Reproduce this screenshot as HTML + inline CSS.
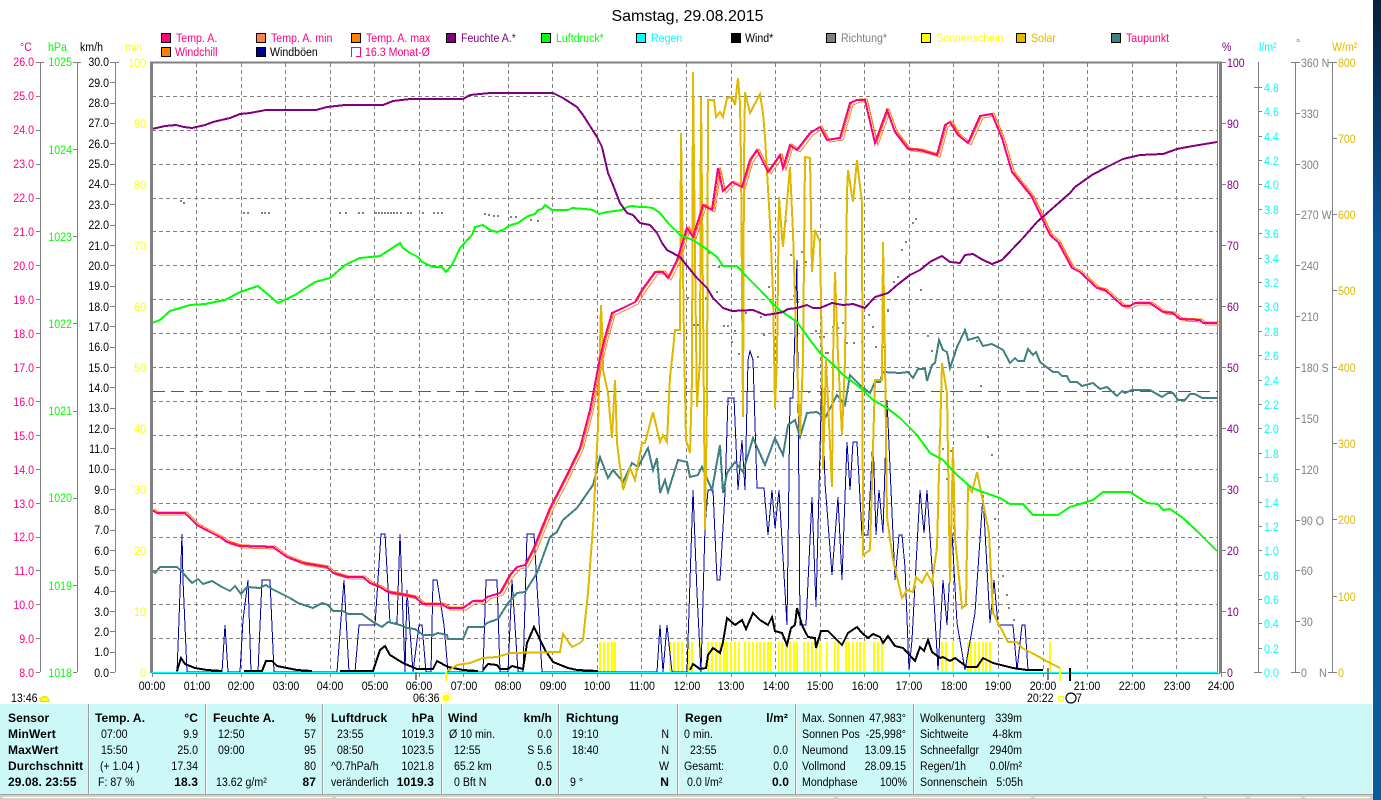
<!DOCTYPE html>
<html><head><meta charset="utf-8"><title>Samstag, 29.08.2015</title>
<style>
html,body{margin:0;padding:0;background:#fff;width:1381px;height:800px;overflow:hidden}
svg{display:block;position:absolute;left:0;top:0}
text{font-family:"Liberation Sans",sans-serif;font-size:12px;transform-box:fill-box;transform-origin:0 0;transform:scaleX(.885)}
text.e{text-anchor:end;transform-origin:100% 0}
text.m{text-anchor:middle;transform-origin:50% 0}
text.b{font-weight:bold;transform:none;letter-spacing:.1px}
text.t{font-size:16px;transform:none}
.c{shape-rendering:crispEdges}
polyline{fill:none;stroke-linejoin:miter}
</style></head><body>
<svg width="1381" height="800" viewBox="0 0 1381 800" xmlns="http://www.w3.org/2000/svg">
<defs>
<linearGradient id="bg" x1="0" y1="0" x2="0" y2="1"><stop offset="0" stop-color="#05203c"/><stop offset=".3" stop-color="#07559b"/><stop offset="1" stop-color="#0a5b9e"/></linearGradient>
<polyline id="tt" points="152,510 157,513 185,513 197,525 208,531 220,537 227,542 240,546 273,547 287,557 303,563 327,567 333,573 347,577 363,577 370,583 380,587 388,592 400,594 415,597 423,604 442,604 448,608 463,608 473,601 483,601 487,597 500,593 510,575 517,567 525,565 533,550 550,508 563,483 580,448 590,410 600,358 605,337 612,313 623,308 635,302 642,290 655,272 663,272 668,278 677,260 687,228 693,237 703,205 712,210 718,168 723,191 732,182 742,187 750,160 757,150 768,172 780,155 783,168 790,145 797,150 810,133 820,127 827,140 840,138 850,103 857,100 865,100 875,143 887,110 895,132 908,149 920,150 930,153 937,155 945,125 950,122 958,135 968,143 980,116 992,114 1002,138 1012,172 1032,197 1050,235 1058,242 1072,268 1080,272 1097,288 1105,290 1123,306 1130,306 1135,303 1150,303 1163,312 1173,313 1180,319 1200,320 1203,323 1217,323"/>
</defs>
<rect x="1373" y="0" width="8" height="800" fill="url(#bg)"/>

<!-- title -->
<text class="t m" x="687.5" y="21" fill="#000">Samstag, 29.08.2015</text>

<!-- legend -->
<g class="c" stroke="#000" stroke-width="1">
<rect x="161.5" y="33.5" width="9" height="9" fill="#ff0080"/>
<rect x="256.5" y="33.5" width="9" height="9" fill="#ff8040"/>
<rect x="351.5" y="33.5" width="9" height="9" fill="#ff8000"/>
<rect x="446.5" y="33.5" width="9" height="9" fill="#800080"/>
<rect x="541.5" y="33.5" width="9" height="9" fill="#00ff00"/>
<rect x="636.5" y="33.5" width="9" height="9" fill="#00ffff"/>
<rect x="731.5" y="33.5" width="9" height="9" fill="#000"/>
<rect x="826.5" y="33.5" width="9" height="9" fill="#808080"/>
<rect x="921.5" y="33.5" width="9" height="9" fill="#ffff00"/>
<rect x="1016.5" y="33.5" width="9" height="9" fill="#e0b800"/>
<rect x="1111.5" y="33.5" width="9" height="9" fill="#408080"/>
<rect x="161.5" y="47.5" width="9" height="9" fill="#ff8000"/>
<rect x="256.5" y="47.5" width="9" height="9" fill="#000090"/>
</g>
<path class="c" d="M351.5 57V47.5H360.5V56.5H356" fill="none" stroke="#ff0080"/>
<text x="176" y="42" fill="#ff0080">Temp. A.</text>
<text x="271" y="42" fill="#ff0080">Temp. A. min</text>
<text x="366" y="42" fill="#ff0080">Temp. A. max</text>
<text x="461" y="42" fill="#800080">Feuchte A.*</text>
<text x="556" y="42" fill="#00ff00">Luftdruck*</text>
<text x="651" y="42" fill="#00ffff">Regen</text>
<text x="745" y="42" fill="#000">Wind*</text>
<text x="841" y="42" fill="#808080">Richtung*</text>
<text x="936" y="42" fill="#ffff00">Sonnenschein</text>
<text x="1031" y="42" fill="#e0b800">Solar</text>
<text x="1126" y="42" fill="#ff0080">Taupunkt</text>
<text x="175" y="56" fill="#ff0080">Windchill</text>
<text x="270" y="56" fill="#000">Windböen</text>
<text x="365" y="56" fill="#ff0080">16.3 Monat-Ø</text>

<!-- axis headers -->
<text x="20" y="51" fill="#ff0080">°C</text>
<text x="48" y="51" fill="#00ff00">hPa</text>
<text x="80" y="51" fill="#000">km/h</text>
<text x="125" y="51" fill="#ffff00">min</text>
<text x="1222" y="51" fill="#800080">%</text>
<text x="1259" y="51" fill="#00ffff">l/m²</text>
<text x="1296" y="47" fill="#808080">°</text>
<text x="1332" y="51" fill="#e0b800">W/m²</text>

<!-- grid -->
<path class="c" fill="none" stroke="#808080" stroke-width="1" stroke-dasharray="4 3" d="M152 96.5H1218M152 130.5H1218M152 164.5H1218M152 198.5H1218M152 231.5H1218M152 265.5H1218M152 299.5H1218M152 333.5H1218M152 367.5H1218M152 401.5H1218M152 435.5H1218M152 469.5H1218M152 503.5H1218M152 537.5H1218M152 570.5H1218M152 604.5H1218M152 638.5H1218"/>
<path class="c" fill="none" stroke="#808080" stroke-width="1" stroke-dasharray="4 3" d="M196.5 63V672M241.5 63V672M285.5 63V672M330.5 63V672M374.5 63V672M419.5 63V672M463.5 63V672M508.5 63V672M552.5 63V672M597.5 63V672M641.5 63V672M686.5 63V672M731.5 63V672M775.5 63V672M820.5 63V672M864.5 63V672M909.5 63V672M953.5 63V672M998.5 63V672M1043.5 63V672M1087.5 63V672M1132.5 63V672M1176.5 63V672"/>

<!-- axes -->
<path class="c" fill="none" stroke="#808080" stroke-width="1" d="M40.5 62V672M36 62.5H44M36 96.5H40M36 130.5H40M36 164.5H40M36 198.5H40M36 231.5H40M36 265.5H40M36 299.5H40M36 333.5H40M36 367.5H40M36 401.5H40M36 435.5H40M36 469.5H40M36 503.5H40M36 537.5H40M36 570.5H40M36 604.5H40M36 638.5H40M36 672.5H40
M77.5 62V672M73 62.5H81M73 149.5H77M73 236.5H77M73 323.5H77M73 411.5H77M73 498.5H77M73 585.5H77M73 672.5H77
M115.5 62V672M110 62.5H119M110 82.5H115M110 103.5H115M110 123.5H115M110 143.5H115M110 164.5H115M110 184.5H115M110 204.5H115M110 225.5H115M110 245.5H115M110 265.5H115M110 286.5H115M110 306.5H115M110 326.5H115M110 347.5H115M110 367.5H115M110 387.5H115M110 408.5H115M110 428.5H115M110 448.5H115M110 469.5H115M110 489.5H115M110 509.5H115M110 530.5H115M110 550.5H115M110 570.5H115M110 591.5H115M110 611.5H115M110 631.5H115M110 652.5H115M110 672.5H115
M1217.5 62V672M1222 62.5H1226M1222 123.5H1226M1222 184.5H1226M1222 245.5H1226M1222 306.5H1226M1222 367.5H1226M1222 428.5H1226M1222 489.5H1226M1222 550.5H1226M1222 611.5H1226M1222 672.5H1226
M1258.5 62V672M1254 87.5H1262M1258 111.5H1262M1258 136.5H1262M1258 160.5H1262M1258 184.5H1262M1258 209.5H1262M1258 233.5H1262M1258 258.5H1262M1258 282.5H1262M1258 306.5H1262M1258 331.5H1262M1258 355.5H1262M1258 380.5H1262M1258 404.5H1262M1258 428.5H1262M1258 453.5H1262M1258 477.5H1262M1258 502.5H1262M1258 526.5H1262M1258 550.5H1262M1258 575.5H1262M1258 599.5H1262M1258 623.5H1262M1258 648.5H1262M1254 672.5H1262
M1295.5 62V672M1291 62.5H1300M1295 113.5H1300M1295 164.5H1300M1295 214.5H1300M1295 265.5H1300M1295 316.5H1300M1295 367.5H1300M1295 418.5H1300M1295 469.5H1300M1295 520.5H1300M1295 570.5H1300M1295 621.5H1300M1291 672.5H1300
M1332.5 62V672M1328 62.5H1337M1332 138.5H1337M1332 214.5H1337M1332 290.5H1337M1332 367.5H1337M1332 443.5H1337M1332 519.5H1337M1332 596.5H1337M1328 672.5H1337"/>
<g fill="#ff0080">
<text class="e" x="34" y="66">26.0</text><text class="e" x="34" y="100">25.0</text><text class="e" x="34" y="134">24.0</text><text class="e" x="34" y="168">23.0</text><text class="e" x="34" y="202">22.0</text><text class="e" x="34" y="236">21.0</text><text class="e" x="34" y="270">20.0</text><text class="e" x="34" y="304">19.0</text><text class="e" x="34" y="338">18.0</text><text class="e" x="34" y="372">17.0</text><text class="e" x="34" y="406">16.0</text><text class="e" x="34" y="440">15.0</text><text class="e" x="34" y="474">14.0</text><text class="e" x="34" y="508">13.0</text><text class="e" x="34" y="541">12.0</text><text class="e" x="34" y="575">11.0</text><text class="e" x="34" y="609">10.0</text><text class="e" x="34" y="643">9.0</text><text class="e" x="34" y="677">8.0</text>
</g>
<g fill="#00ff00">
<text class="e" x="72" y="66">1025</text><text class="e" x="72" y="154">1024</text><text class="e" x="72" y="241">1023</text><text class="e" x="72" y="328">1022</text><text class="e" x="72" y="415">1021</text><text class="e" x="72" y="502">1020</text><text class="e" x="72" y="590">1019</text><text class="e" x="72" y="677">1018</text>
</g>
<g fill="#000">
<text class="e" x="109" y="66">30.0</text><text class="e" x="109" y="87">29.0</text><text class="e" x="109" y="107">28.0</text><text class="e" x="109" y="127">27.0</text><text class="e" x="109" y="148">26.0</text><text class="e" x="109" y="168">25.0</text><text class="e" x="109" y="188">24.0</text><text class="e" x="109" y="209">23.0</text><text class="e" x="109" y="229">22.0</text><text class="e" x="109" y="250">21.0</text><text class="e" x="109" y="270">20.0</text><text class="e" x="109" y="290">19.0</text><text class="e" x="109" y="311">18.0</text><text class="e" x="109" y="331">17.0</text><text class="e" x="109" y="351">16.0</text><text class="e" x="109" y="372">15.0</text><text class="e" x="109" y="392">14.0</text><text class="e" x="109" y="412">13.0</text><text class="e" x="109" y="433">12.0</text><text class="e" x="109" y="453">11.0</text><text class="e" x="109" y="473">10.0</text><text class="e" x="109" y="494">9.0</text><text class="e" x="109" y="514">8.0</text><text class="e" x="109" y="534">7.0</text><text class="e" x="109" y="555">6.0</text><text class="e" x="109" y="575">5.0</text><text class="e" x="109" y="595">4.0</text><text class="e" x="109" y="616">3.0</text><text class="e" x="109" y="636">2.0</text><text class="e" x="109" y="656">1.0</text><text class="e" x="109" y="677">0.0</text>
</g>
<g fill="#ffff00">
<text class="e" x="146" y="67">100</text><text class="e" x="146" y="128">90</text><text class="e" x="146" y="189">80</text><text class="e" x="146" y="250">70</text><text class="e" x="146" y="311">60</text><text class="e" x="146" y="372">50</text><text class="e" x="146" y="433">40</text><text class="e" x="146" y="494">30</text><text class="e" x="146" y="555">20</text><text class="e" x="146" y="616">10</text><text class="e" x="146" y="677">0</text>
</g>
<g fill="#800080">
<text x="1227" y="67">100</text><text x="1227" y="128">90</text><text x="1227" y="189">80</text><text x="1227" y="250">70</text><text x="1227" y="311">60</text><text x="1227" y="372">50</text><text x="1227" y="433">40</text><text x="1227" y="494">30</text><text x="1227" y="555">20</text><text x="1227" y="616">10</text><text x="1227" y="677">0</text>
</g>
<g fill="#00ffff">
<text x="1264" y="92">4.8</text><text x="1264" y="116">4.6</text><text x="1264" y="141">4.4</text><text x="1264" y="165">4.2</text><text x="1264" y="189">4.0</text><text x="1264" y="214">3.8</text><text x="1264" y="238">3.6</text><text x="1264" y="263">3.4</text><text x="1264" y="287">3.2</text><text x="1264" y="311">3.0</text><text x="1264" y="336">2.8</text><text x="1264" y="360">2.6</text><text x="1264" y="385">2.4</text><text x="1264" y="409">2.2</text><text x="1264" y="433">2.0</text><text x="1264" y="458">1.8</text><text x="1264" y="482">1.6</text><text x="1264" y="507">1.4</text><text x="1264" y="531">1.2</text><text x="1264" y="555">1.0</text><text x="1264" y="580">0.8</text><text x="1264" y="604">0.6</text><text x="1264" y="628">0.4</text><text x="1264" y="653">0.2</text><text x="1264" y="677">0.0</text>
</g>
<g fill="#808080">
<text x="1301" y="67">360 N</text><text x="1301" y="118">330</text><text x="1301" y="169">300</text><text x="1301" y="219">270 W</text><text x="1301" y="270">240</text><text x="1301" y="321">210</text><text x="1301" y="372">180 S</text><text x="1301" y="423">150</text><text x="1301" y="474">120</text><text x="1301" y="525">90 O</text><text x="1301" y="575">60</text><text x="1301" y="626">30</text><text x="1301" y="677">0</text><text x="1319" y="677">N</text>
</g>
<g fill="#e0b800">
<text x="1338" y="67">800</text><text x="1338" y="143">700</text><text x="1338" y="219">600</text><text x="1338" y="295">500</text><text x="1338" y="372">400</text><text x="1338" y="448">300</text><text x="1338" y="524">200</text><text x="1338" y="601">100</text><text x="1338" y="677">0</text>
</g>

<!-- direction dots -->
<path class="c" fill="none" stroke="#808080" stroke-width="2" stroke-linecap="butt" d="M180 201h2M183 203h2M243 213h2M247 213h2M261 213h2M264 213h2M268 213h2M339 213h2M345 213h2M358 213h2M362 213h2M375 213h2M378 213h2M381 213h2M384 213h2M387 213h2M390 213h2M393 213h2M396 213h2M400 213h2M407 213h2M410 213h2M422 213h2M433 213h2M437 213h2M441 213h2M484 214h2M488 215h2M493 216h2M497 216h2M510 217h2M515 217h2M530 220h2M537 221h2M780 223h2M785 221h2M773 237h2M790 255h2M801 252h2M805 262h2M718 267h2M708 253h2M768 287h2M793 296h2M705 298h2M716 292h2M797 302h2M687 298h2M835 298h2M887 310h2M893 282h2M897 277h2M901 250h2M905 242h2M912 223h2M915 219h2M920 290h2M745 313h2M760 317h2M723 326h2M727 326h2M734 331h2M693 325h2M697 325h2M763 335h2M731 342h2M738 354h2M757 357h2M815 331h2M819 337h2M823 337h2M825 353h2M827 353h2M832 327h2M837 328h2M842 323h2M846 343h2M853 343h2M861 342h2M868 315h2M872 327h2M875 347h2M883 347h2M887 311h2M927 336h2M931 351h2M954 354h2M976 341h2M980 386h2M942 449h2M950 451h2M987 437h2M991 455h2M946 479h2M1002 576h2M1006 595h2M1008 608h2M1013 620h2M994 519h2M998 547h2M808 392h2"/>

<!-- month avg -->
<path class="c" d="M152 391.5H1218" stroke="#ff0080" stroke-width="1" stroke-dasharray="13 6" fill="none"/>

<!-- sunshine bars -->
<path class="c" fill="none" stroke="#ffff00" stroke-width="2" d="M600 642V672M604 642V672M608 642V672M612 642V672M615 642V672M670 642V672M674 642V672M678 642V672M682 642V672M689 642V672M692 642V672M700 642V672M708 642V672M712 642V672M716 642V672M720 642V672M724 642V672M727 642V672M731 642V672M735 642V672M739 642V672M745 642V672M749 642V672M753 642V672M757 642V672M760 642V672M764 642V672M768 642V672M771 642V672M779 642V672M782 642V672M786 642V672M790 642V672M794 642V672M797 642V672M804 642V672M808 642V672M812 642V672M816 642V672M820 642V672M827 642V672M835 642V672M838 642V672M846 642V672M849 642V672M853 642V672M857 642V672M860 642V672M864 642V672M874 642V672M878 642V672M882 642V672M942 642V672M946 642V672M953 642V672M968 642V672M971 642V672M975 642V672M979 642V672M983 642V672M986 642V672M990 642V672M1050 642V672"/>

<!-- gusts -->
<polyline class="c" stroke="#0000a0" stroke-width="1" points="177,672 179,620 182,534 183,580 187,672 222,672 225,625 228,672 240,672 243,620 248,580 251,672 258,672 262,580 270,580 274,672 337,672 344,580 349,672 355,672 359,625 375,625 381,534 385,534 390,623 397,623 400,534 405,672 407,590 413,672 419,625 422,625 426,672 431,672 433,580 437,580 444,625 448,672 483,672 486,580 497,580 500,672 508,672 512,580 518,672 523,672 527,534 534,534 542,672 657,672 660,625 663,672 667,625 672,672 687,672 693,490 697,593 701,672 705,527 708,490 713,490 717,580 720,580 725,493 728,398 734,398 738,490 742,440 745,490 748,360 750,351 753,360 757,488 764,488 768,535 772,490 775,528 779,490 787,625 790,398 793,398 797,260 800,625 806,625 812,497 816,607 822,373 825,483 832,575 838,497 842,580 847,442 850,490 853,442 857,442 862,535 868,535 873,437 876,535 879,490 883,533 887,400 895,580 899,535 902,535 905,567 909,670 912,640 920,490 924,533 927,490 933,583 938,670 943,580 947,625 952,533 957,623 965,670 975,613 983,495 990,623 994,580 998,625 1013,625 1017,670 1022,625 1025,625 1028,670"/>

<!-- wind -->
<g class="c" stroke="#000" stroke-width="2">
<polyline points="177,671 181,658 185,664 195,668 207,670 222,671"/>
<polyline points="244,671 262,671 266,661 272,661 277,666 297,670 312,671"/>
<polyline points="340,671 373,671 380,650 385,646 390,655 403,663 417,669 433,669 437,661 448,667 463,670 478,671"/>
<polyline points="483,670 488,664 497,665 500,669 508,669 512,666 523,669 527,643 534,627 545,650 553,662 568,668 577,670 598,671"/>
<polyline points="690,670 693,664 700,669 706,668 708,655 713,648 720,653 723,642 727,618 735,625 742,620 746,629 753,613 760,620 768,625 772,617 775,631 782,633 787,645 791,628 795,625 797,608 802,625 808,637 815,638 816,648 821,631 828,631 842,645 848,633 857,627 862,633 868,638 873,634 880,637 883,643 888,636 895,646 903,648 915,661 920,647 924,651 928,640 932,652 940,658 943,657 950,661 955,658 967,667 977,667 983,658 993,663 1013,668 1027,670 1043,670"/>
</g>

<!-- dew point -->
<polyline class="c" stroke="#408080" stroke-width="2" points="152,570 155,573 160,567 177,567 183,573 192,583 198,579 203,584 212,581 222,587 230,591 235,586 241,594 247,587 260,588 266,585 272,589 290,598 298,603 313,608 322,603 328,605 333,611 343,611 348,614 362,614 373,622 382,627 388,622 400,625 407,628 415,629 423,635 433,635 438,633 447,635 448,639 463,639 468,627 483,627 487,623 498,619 508,603 517,593 525,592 537,573 550,537 557,532 563,520 577,508 593,485 600,457 608,478 613,470 623,482 632,463 638,467 648,448 653,470 657,458 660,493 665,480 668,492 678,460 687,462 690,477 698,475 702,467 712,490 720,445 723,493 727,473 735,462 743,472 753,438 765,465 775,438 783,455 788,425 795,420 800,437 807,413 817,412 825,418 837,395 845,405 850,375 862,387 870,393 875,382 880,382 883,372 900,373 908,372 913,378 918,369 925,369 927,381 932,365 935,363 939,340 943,350 947,352 950,368 957,347 965,330 968,340 978,337 983,346 992,344 1003,350 1010,363 1015,358 1018,361 1024,361 1028,349 1033,355 1036,352 1040,362 1053,372 1058,372 1062,376 1067,376 1070,382 1077,382 1082,386 1093,383 1100,389 1107,387 1117,396 1122,391 1125,393 1132,390 1150,390 1162,397 1168,393 1173,393 1178,400 1185,400 1190,394 1195,394 1202,398 1217,398"/>

<!-- solar -->
<polyline class="c" stroke="#e0b800" stroke-width="2" points="448,671 457,665 470,663 483,658 497,657 510,653 560,652 563,634 572,647 580,643 583,640 588,593 593,527 598,427 601,305 602,327 603,370 608,393 612,438 615,380 617,443 623,490 630,468 635,480 642,443 645,443 653,412 660,442 663,435 667,442 670,377 673,350 675,330 680,330 681,133 684,340 686,440 690,453 692,380 693,72 695,260 697,407 700,360 701,97 703,300 705,530 707,400 708,100 714,100 716,117 720,112 723,117 727,98 732,97 735,105 738,78 740,103 741,160 743,417 744,160 745,92 750,113 760,94 763,113 765,137 770,223 773,293 775,408 777,357 779,197 782,237 783,247 790,167 793,233 797,360 800,435 803,360 805,157 810,158 812,272 815,230 820,242 822,360 823,470 826,360 832,487 833,360 835,272 838,357 842,435 845,360 847,193 848,170 853,202 857,160 862,203 863,555 870,550 875,380 882,380 883,242 885,357 887,517 893,560 902,598 907,590 913,592 916,577 922,583 927,573 932,583 937,547 942,363 947,393 950,583 953,447 955,538 962,608 966,605 968,487 972,492 977,472 983,502 989,533 993,613 1008,642 1017,642 1022,648 1032,653 1050,663 1060,668"/>

<!-- temperature family -->
<use href="#tt" class="c" stroke="#ff8040" stroke-width="1" transform="translate(3 2)"/>
<use href="#tt" class="c" stroke="#ff8000" stroke-width="1" transform="translate(2 -1)"/>
<use href="#tt" class="c" stroke="#ff0080" stroke-width="2"/>

<!-- pressure -->
<polyline class="c" stroke="#00ff00" stroke-width="2" points="152,323 160,320 170,311 190,305 205,304 225,300 240,292 258,286 265,292 278,303 295,295 315,282 330,278 345,265 360,258 380,256 400,243 403,248 410,253 418,257 422,262 433,267 442,267 446,272 452,265 460,248 472,235 475,227 483,225 490,230 497,232 505,229 508,226 518,223 528,216 535,214 538,210 542,209 545,205 552,210 568,210 572,208 585,209 593,210 599,214 607,212 622,210 627,207 632,206 640,207 645,207 653,208 660,213 668,223 680,235 693,240 705,248 717,257 723,266 737,266 747,277 760,290 777,308 787,315 797,322 810,340 820,353 828,360 837,368 843,375 853,382 863,390 873,400 887,408 900,418 917,435 930,453 943,460 957,475 972,488 983,492 1000,498 1010,504 1023,504 1033,515 1058,515 1070,507 1093,500 1103,492 1120,492 1130,492 1147,503 1158,504 1163,510 1170,509 1183,518 1198,532 1217,551"/>

<!-- humidity -->
<polyline class="c" stroke="#800080" stroke-width="2" points="152,129 165,126 176,125 184,127 192,128 205,125 213,122 230,118 240,114 250,113 266,110 316,110 327,107 345,105 383,105 393,101 410,99 463,99 470,95 480,94 490,93 553,93 563,98 577,107 583,115 597,137 602,147 608,173 613,185 620,203 627,213 633,215 640,223 650,225 657,233 662,243 667,250 680,257 697,278 707,288 713,298 723,308 732,311 753,310 765,315 773,314 783,312 788,309 797,308 807,305 813,308 820,308 832,303 843,305 853,304 865,308 875,297 888,293 897,285 910,275 920,270 930,262 942,256 950,262 960,263 965,255 973,254 983,260 992,264 1002,260 1023,238 1037,222 1070,193 1075,187 1092,175 1107,167 1123,159 1140,155 1163,154 1177,149 1193,146 1217,142"/>

<!-- frame -->
<path class="c" fill="none" stroke="#808080" d="M150 62.5H1222" stroke-width="2"/>
<path class="c" fill="none" stroke="#808080" d="M151.5 62V673" stroke-width="3"/>
<path class="c" fill="none" stroke="#808080" d="M1220.5 62V673" stroke-width="3"/>
<path class="c" fill="none" stroke="#808080" d="M152 673.5H1220" stroke-width="1"/>
<path class="c" fill="none" stroke="#00ffff" d="M152 672.5H1218" stroke-width="1"/>

<!-- x ticks and markers -->
<path class="c" fill="none" stroke="#808080" d="M152.5 673V677M196.5 673V677M241.5 673V677M285.5 673V677M330.5 673V677M374.5 673V677M419.5 673V677M463.5 673V677M508.5 673V677M552.5 673V677M597.5 673V677M641.5 673V677M686.5 673V677M731.5 673V677M775.5 673V677M820.5 673V677M864.5 673V677M909.5 673V677M953.5 673V677M998.5 673V677M1043.5 673V677M1087.5 673V677M1132.5 673V677M1176.5 673V677M1221.5 673V677"/>
<path class="c" d="M416 672V680M1048 668V680" stroke="#808080" stroke-width="2" fill="none"/>
<path class="c" d="M446 672V681M1060 668V681" stroke="#ffff00" stroke-width="2" fill="none"/>
<path class="c" d="M1070 668V681" stroke="#000" stroke-width="2" fill="none"/>

<g fill="#000">
<text class="m" x="152" y="690">00:00</text><text class="m" x="197" y="690">01:00</text><text class="m" x="241" y="690">02:00</text><text class="m" x="286" y="690">03:00</text><text class="m" x="330" y="690">04:00</text><text class="m" x="375" y="690">05:00</text><text class="m" x="419" y="690">06:00</text><text class="m" x="464" y="690">07:00</text><text class="m" x="508" y="690">08:00</text><text class="m" x="553" y="690">09:00</text><text class="m" x="597" y="690">10:00</text><text class="m" x="642" y="690">11:00</text><text class="m" x="687" y="690">12:00</text><text class="m" x="731" y="690">13:00</text><text class="m" x="776" y="690">14:00</text><text class="m" x="820" y="690">15:00</text><text class="m" x="865" y="690">16:00</text><text class="m" x="909" y="690">17:00</text><text class="m" x="954" y="690">18:00</text><text class="m" x="998" y="690">19:00</text><text class="m" x="1043" y="690">20:00</text><text class="m" x="1087" y="690">21:00</text><text class="m" x="1132" y="690">22:00</text><text class="m" x="1177" y="690">23:00</text><text class="m" x="1221" y="690">24:00</text>
<text x="11" y="702">13:46</text>
<text x="413" y="702">06:36</text>
<text x="1027" y="702">20:22</text>
<text x="1076" y="702">7</text>
</g>
<path d="M40 701.5a4.5 5 0 0 1 9 0z" fill="#ffff00" stroke="#e8d800" stroke-width="1"/>
<circle cx="446" cy="698" r="3.5" fill="#ffff00"/>
<circle cx="446" cy="698" r="5.5" fill="none" stroke="#ffff80" stroke-width="1.5" stroke-dasharray="1.5 1.5"/>
<rect class="c" x="1058.5" y="696.5" width="5" height="4" fill="#fff" stroke="#ffff00"/>
<circle cx="1071" cy="698" r="5" fill="none" stroke="#000" stroke-width="1.2"/>

<!-- bottom panel -->
<rect x="0" y="704" width="1372" height="90" fill="#ccf9f8"/>
<path class="c" fill="none" stroke="#a0a0a0" d="M88.5 704V794M205.5 704V794M322.5 704V794M441.5 704V794M558.5 704V794M677.5 704V794M795.5 704V794M913.5 704V794"/>
<path class="c" fill="none" stroke="#ffffff" d="M89.5 704V794M206.5 704V794M323.5 704V794M442.5 704V794M559.5 704V794M678.5 704V794M796.5 704V794M914.5 704V794"/>
<rect x="0" y="794" width="1373" height="6" fill="#d4d0c8"/>
<path class="c" d="M0 794.5H1373" stroke="#a0a0a0" fill="none"/>
<path class="c" d="M3 797.5H332M336 797.5H834M838 797.5H1031M1035 797.5H1203M1207 797.5H1246M1250 797.5H1301M1305 797.5H1370" stroke="#ffffff" fill="none"/>

<g fill="#000">
<!-- col1 -->
<text class="b" x="8" y="722">Sensor</text><text class="b" x="8" y="738">MinWert</text><text class="b" x="8" y="754">MaxWert</text><text class="b" x="8" y="770">Durchschnitt</text><text class="b" x="8" y="786">29.08. 23:55</text>
<!-- col2 -->
<text class="b" x="95" y="722">Temp. A.</text><text class="b e" x="198" y="722">°C</text>
<text x="101" y="738">07:00</text><text class="e" x="198" y="738">9.9</text>
<text x="101" y="754">15:50</text><text class="e" x="198" y="754">25.0</text>
<text x="100" y="770">(+ 1.04 )</text><text class="e" x="198" y="770">17.34</text>
<text x="98" y="786">F: 87 %</text><text class="b e" x="198" y="786">18.3</text>
<!-- col3 -->
<text class="b" x="213" y="722">Feuchte A.</text><text class="b e" x="316" y="722">%</text>
<text x="218" y="738">12:50</text><text class="e" x="316" y="738">57</text>
<text x="218" y="754">09:00</text><text class="e" x="316" y="754">95</text>
<text class="e" x="316" y="770">80</text>
<text x="216" y="786">13.62 g/m²</text><text class="b e" x="316" y="786">87</text>
<!-- col4 -->
<text class="b" x="331" y="722">Luftdruck</text><text class="b e" x="434" y="722">hPa</text>
<text x="337" y="738">23:55</text><text class="e" x="434" y="738">1019.3</text>
<text x="337" y="754">08:50</text><text class="e" x="434" y="754">1023.5</text>
<text x="331" y="770">^0.7hPa/h</text><text class="e" x="434" y="770">1021.8</text>
<text x="331" y="786">veränderlich</text><text class="b e" x="434" y="786">1019.3</text>
<!-- col5 -->
<text class="b" x="448" y="722">Wind</text><text class="b e" x="552" y="722">km/h</text>
<text x="449" y="738">Ø 10 min.</text><text class="e" x="552" y="738">0.0</text>
<text x="454" y="754">12:55</text><text class="e" x="552" y="754">S 5.6</text>
<text x="454" y="770">65.2 km</text><text class="e" x="552" y="770">0.5</text>
<text x="454" y="786">0 Bft N</text><text class="b e" x="552" y="786">0.0</text>
<!-- col6 -->
<text class="b" x="566" y="722">Richtung</text>
<text x="572" y="738">19:10</text><text class="e" x="669" y="738">N</text>
<text x="572" y="754">18:40</text><text class="e" x="669" y="754">N</text>
<text class="e" x="669" y="770">W</text>
<text x="570" y="786">9 °</text><text class="b e" x="669" y="786">N</text>
<!-- col7 -->
<text class="b" x="685" y="722">Regen</text><text class="b e" x="788" y="722">l/m²</text>
<text x="684" y="738">0 min.</text>
<text x="690" y="754">23:55</text><text class="e" x="788" y="754">0.0</text>
<text x="684" y="770">Gesamt:</text><text class="e" x="788" y="770">0.0</text>
<text x="687" y="786">0.0 l/m²</text><text class="b e" x="789" y="786">0.0</text>
<!-- col8 -->
<text x="802" y="722">Max. Sonnen</text><text class="e" x="906" y="722">47,983°</text>
<text x="802" y="738">Sonnen Pos</text><text class="e" x="906" y="738">-25,998°</text>
<text x="802" y="754">Neumond</text><text class="e" x="906" y="754">13.09.15</text>
<text x="802" y="770">Vollmond</text><text class="e" x="906" y="770">28.09.15</text>
<text x="802" y="786">Mondphase</text><text class="e" x="907" y="786">100%</text>
<!-- col9 -->
<text x="920" y="722">Wolkenunterg</text><text class="e" x="1022" y="722">339m</text>
<text x="920" y="738">Sichtweite</text><text class="e" x="1022" y="738">4-8km</text>
<text x="920" y="754">Schneefallgr</text><text class="e" x="1022" y="754">2940m</text>
<text x="920" y="770">Regen/1h</text><text class="e" x="1022" y="770">0.0l/m²</text>
<text x="920" y="786">Sonnenschein</text><text class="e" x="1023" y="786">5:05h</text>
</g>
</svg>
</body></html>
